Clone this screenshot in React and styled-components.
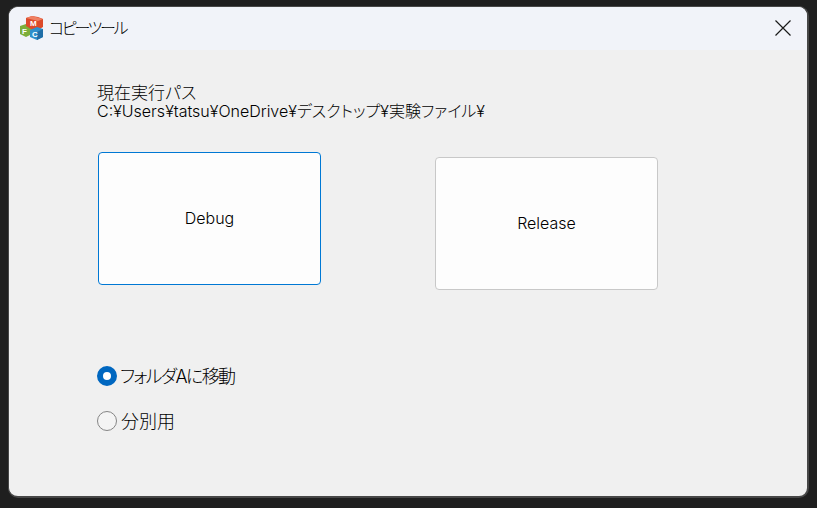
import React from "react";
import styled, { createGlobalStyle } from "styled-components";

const GlobalStyle = createGlobalStyle`
  html, body {
    margin: 0;
    padding: 0;
    background: #1f1f1f;
  }
  body {
    font-family: Inter, "Noto Sans CJK JP", "Liberation Sans", sans-serif;
    font-weight: 300;
    font-feature-settings: "palt";
    color: #000;
  }
`;

const Desktop = styled.div`
  width: 817px;
  height: 508px;
  box-sizing: border-box;
  padding: 6px 8px 10px 8px;
  background: #1f1f1f;
  overflow: hidden;
`;

const Window = styled.div`
  box-sizing: border-box;
  height: 100%;
  display: flex;
  flex-direction: column;
  background: #f0f0f0;
  border-style: solid;
  border-color: #474747;
  border-width: 1px 2px 2px 1px;
  border-radius: 10px;
  overflow: hidden;
`;

const TitleBar = styled.div`
  height: 43px;
  flex: none;
  box-sizing: border-box;
  display: flex;
  align-items: center;
  padding: 0 16px 2px 11px;
  background: #f1f3f9;
`;

const Title = styled.span`
  margin-left: 5px;
  font-size: 16px;
  line-height: 20px;
  letter-spacing: -2.3px;
  flex: 1;
`;

const CloseButton = styled.button`
  width: 16px;
  height: 16px;
  padding: 0;
  border: 0;
  background: none;
  display: block;
`;

const Content = styled.div`
  flex: 1;
  display: flex;
  flex-direction: column;
  padding: 35px 0 0 88px;
`;

const PathLabel = styled.div`
  font-size: 17px;
  line-height: 17px;
`;

const PathValue = styled.div`
  font-size: 16px;
  line-height: 18px;
`;

const ButtonRow = styled.div`
  display: flex;
  gap: 114px;
  margin: 32px 0 0 1px;
`;

const BigButton = styled.button`
  box-sizing: border-box;
  width: 223px;
  height: 133px;
  margin-top: ${(p) => p.$offset || 0}px;
  background: #fdfdfd;
  border: 1px solid ${(p) => (p.$focused ? "#0078d4" : "#c8c8c8")};
  border-radius: 4px;
  font-family: inherit;
  font-weight: 300;
  font-size: 16px;
  color: #000;
  padding: 0 0 2px;
`;

const RadioGroup = styled.div`
  display: flex;
  flex-direction: column;
  gap: 25px;
  margin-top: 76px;
`;

const RadioRow = styled.label`
  display: flex;
  align-items: center;
  height: 20px;
  font-size: 18px;
  letter-spacing: ${(p) => p.$spacing || 0}px;
`;

const RadioText = styled.span`
  margin-top: -2px;
`;

const RadioDot = styled.span`
  box-sizing: border-box;
  width: 20px;
  height: 20px;
  margin-right: ${(p) => (p.$checked ? 3 : 4)}px;
  border-radius: 50%;
  flex: none;
  background: ${(p) => (p.$checked ? "#fff" : "#f4f4f4")};
  border: ${(p) => (p.$checked ? "6px solid #0067c0" : "1.5px solid #858585")};
`;

const AppIcon = () => (
  <svg width="24" height="24" viewBox="0 0 24 24">
    <path d="M0 10l6-2 6 2v8l-6 3-6-3z" fill="#7dae3a" />
    <path d="M6 2l6-2 6 1 5 2v8l-5 3-7-1-5-3z" fill="#dc4a2a" />
    <path d="M12 0l11 3-5 2-12-3z" fill="#ef8063" />
    <path d="M10 14l7-3 6 2v8l-6 3-7-3z" fill="#2f8fcb" />
    <path d="M17 16l6-3v8l-6 3z" fill="#1f6ea8" />
    <text x="10" y="10" fontSize="8" fontWeight="700" fill="#fff" fontFamily="Liberation Sans, sans-serif">M</text>
    <text x="2" y="18" fontSize="8" fontWeight="700" fill="#fff" fontFamily="Liberation Sans, sans-serif">F</text>
    <text x="12" y="21" fontSize="8" fontWeight="700" fill="#fff" fontFamily="Liberation Sans, sans-serif">C</text>
  </svg>
);

const CloseIcon = () => (
  <svg width="16" height="16" viewBox="0 0 16 16">
    <path d="M0.5 0.5L15.5 15.5M15.5 0.5L0.5 15.5" stroke="#1a1a1a" strokeWidth="1.2" fill="none" />
  </svg>
);

const App = () => {
  return (
    <Desktop>
      <GlobalStyle />
      <Window>
        <TitleBar>
          <AppIcon />
          <Title>コピーツール</Title>
          <CloseButton>
            <CloseIcon />
          </CloseButton>
        </TitleBar>
        <Content>
          <PathLabel>現在実行パス</PathLabel>
          <PathValue>C:¥Users¥tatsu¥OneDrive¥デスクトップ¥実験ファイル¥</PathValue>
          <ButtonRow>
            <BigButton $focused>Debug</BigButton>
            <BigButton $offset={5}>Release</BigButton>
          </ButtonRow>
          <RadioGroup>
            <RadioRow $spacing={-1.7}>
              <RadioDot $checked />
              <RadioText>フォルダAに移動</RadioText>
            </RadioRow>
            <RadioRow>
              <RadioDot />
              <RadioText>分別用</RadioText>
            </RadioRow>
          </RadioGroup>
        </Content>
      </Window>
    </Desktop>
  );
};

export default App;
